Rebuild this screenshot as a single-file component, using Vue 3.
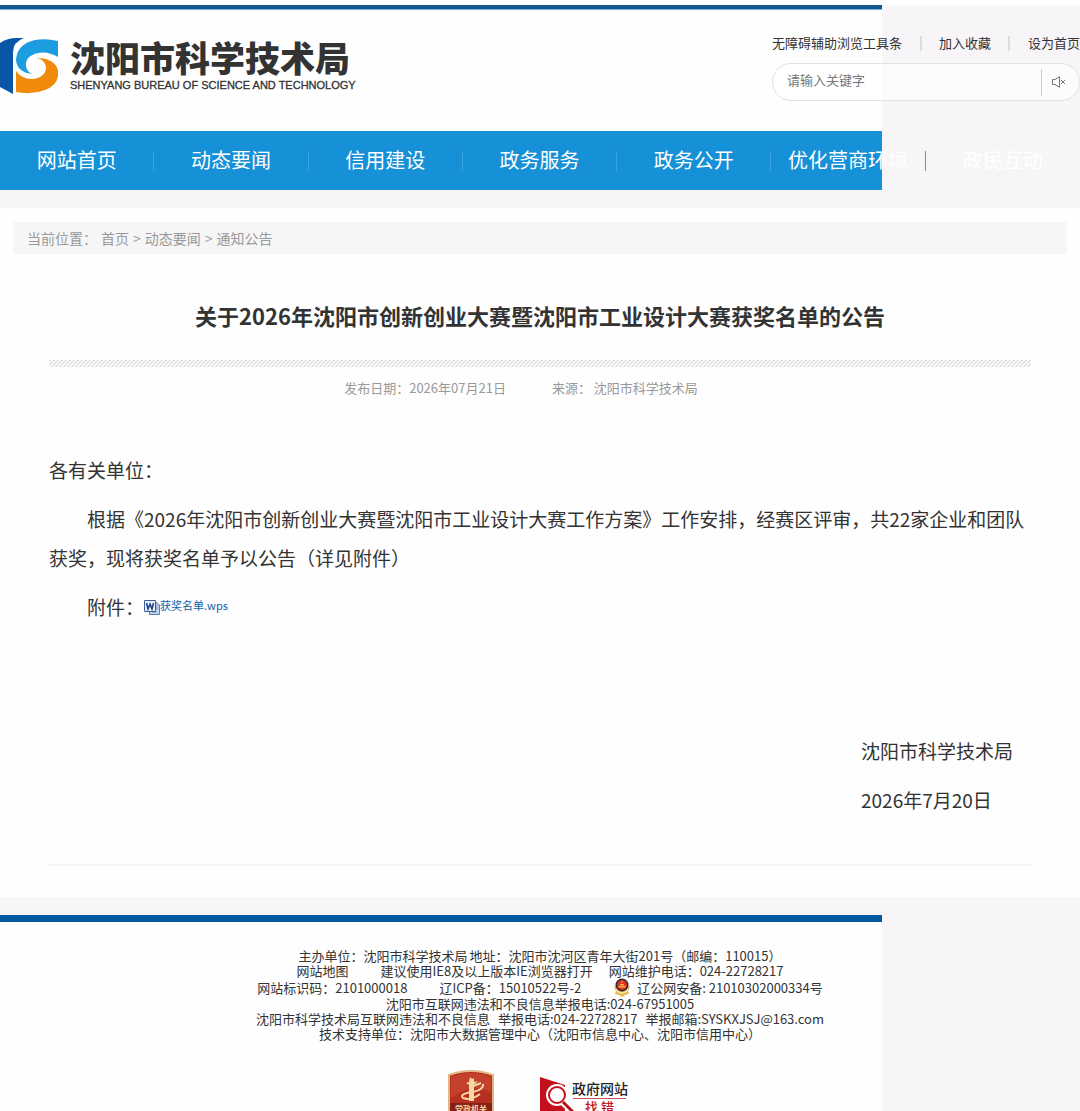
<script setup>
import { ref } from 'vue'

const keyword = ref('')
const navItems = ['网站首页', '动态要闻', '信用建设', '政务服务', '政务公开', '优化营商环境', '政民互动']
const crumbs = ['首页', '动态要闻', '通知公告']
</script>

<template>
  <div class="page">
    <header class="header">
      <div class="band">
        <a class="logo" href="#">
          <svg class="logo-mark" viewBox="0 0 58 56" aria-hidden="true">
            <path d="M0 5Q7 0 17 0H24Q13 4 13 14V56L0 49Z" fill="#0a56a6" />
            <path d="M58 3V19Q48 13 38 15Q25 18 26 28Q27 34 32 36Q17 34 16 22Q17 6 35 2Q46 0 58 3Z" fill="#1b9ddf" />
            <path d="M16 54V33Q23 42 33 41Q46 39 46 29Q45 22 37 20Q54 20 58 32Q60 46 45 52Q32 57 16 54Z" fill="#f08a0a" />
          </svg>
          <span class="logo-text">
            <strong>沈阳市科学技术局</strong>
            <small>SHENYANG BUREAU OF SCIENCE AND TECHNOLOGY</small>
          </span>
        </a>
        <div class="tools">
          <div class="quick">
            <a href="#">无障碍辅助浏览工具条</a>
            <i></i>
            <a href="#">加入收藏</a>
            <i></i>
            <a href="#">设为首页</a>
          </div>
          <form class="search" @submit.prevent>
            <input v-model="keyword" type="text" placeholder="请输入关键字" aria-label="请输入关键字" />
            <button type="button" aria-label="朗读">
              <svg viewBox="0 0 14 12" width="14" height="12" fill="none" stroke="#777" stroke-width="1">
                <path d="M.5 3.5H3L7.5.7V11.3L3 8.5H.5ZM9 4L13 8M13 4L9 8" />
              </svg>
            </button>
          </form>
        </div>
      </div>
      <nav class="nav">
        <a v-for="item in navItems" :key="item" href="#">{{ item }}</a>
      </nav>
    </header>

    <main class="main">
      <div class="crumbs">
        <span>当前位置：</span>
        <template v-for="(crumb, i) in crumbs" :key="crumb">
          <span v-if="i">&gt;</span>
          <a href="#">{{ crumb }}</a>
        </template>
      </div>

      <article class="article">
        <h1>关于2026年沈阳市创新创业大赛暨沈阳市工业设计大赛获奖名单的公告</h1>
        <div class="hatch"></div>
        <div class="meta">
          <span>发布日期：2026年07月21日</span>
          <span>来源： 沈阳市科学技术局</span>
        </div>
        <div class="body">
          <p>各有关单位：</p>
          <p class="indent">根据《2026年沈阳市创新创业大赛暨沈阳市工业设计大赛工作方案》工作安排，经赛区评审，共22家企业和团队获奖，现将获奖名单予以公告（详见附件）</p>
          <p class="indent attach">
            <span>附件：</span>
            <a href="#">
              <svg viewBox="0 0 16 16" width="16" height="16" aria-hidden="true">
                <path d="M5.5 3.5H13L15.500 6V15.500H5.500Z" fill="#c9d8ef" stroke="#5a78ad" />
                <path d="M12 6H14M12 8H14M12 10H14M8 13H13" stroke="#6e8fc4" />
                <path d="M.5 1.500H11.500V12.500H.5Z" fill="#eaf1fb" stroke="#3b5f9c" />
                <path d="M2.500 4L4 10L6 5L8 10L9.500 4" fill="none" stroke="#193f80" stroke-width="1.500" />
              </svg><span>获奖名单.wps</span></a>
          </p>
          <div class="sign">
            <p>沈阳市科学技术局</p>
            <p>2026年7月20日</p>
          </div>
        </div>
      </article>
    </main>

    <footer class="footer">
      <div class="foot-inner">
        <div class="row"><span>主办单位：沈阳市科学技术局</span><span>地址：沈阳市沈河区青年大街201号（邮编：110015）</span></div>
        <div class="row row-site"><a href="#">网站地图</a><span>建议使用IE8及以上版本IE浏览器打开</span><span>网站维护电话：024-22728217</span></div>
        <div class="row row-icp">
          <span>网站标识码：2101000018</span>
          <a href="#">辽ICP备：15010522号-2</a>
          <a class="police" href="#">
            <svg viewBox="0 0 18 19" width="18" height="19" aria-hidden="true">
              <path d="M1 9L3 13L2 16Q6 16 9 19Q12 16 16 16L15 13L17 9L14 7H4Z" fill="#eab54a" />
              <path d="M3 11Q6 15 9 15Q12 15 15 11" fill="none" stroke="#fbe5a0" stroke-width="1.500" />
              <circle cx="9" cy="7" r="6.500" fill="#2b2534" />
              <circle cx="9" cy="7" r="5" fill="#df3424" />
              <path d="M9 2.500L10 4.500H8ZM5.500 8H12.500V9.500H5.500ZM7 6H11V7.500H7Z" fill="#f6b04a" />
            </svg>
            辽公网安备: 21010302000334号
          </a>
        </div>
        <div class="row"><span>沈阳市互联网违法和不良信息举报电话:024-67951005</span></div>
        <div class="row row-report"><span>沈阳市科学技术局互联网违法和不良信息</span><span>举报电话:024-22728217</span><span>举报邮箱:SYSKXJSJ@163.com</span></div>
        <div class="row"><span>技术支持单位：沈阳市大数据管理中心（沈阳市信息中心、沈阳市信用中心）</span></div>
        <div class="badges">
          <a href="#" aria-label="党政机关">
            <svg viewBox="0 0 46 54" width="46" height="54">
              <path d="M1 5Q12 1 23 1Q34 1 45 5V40Q45 48 23 53Q1 48 1 40Z" fill="#b5301f" stroke="#e2b685" stroke-width="2" />
              <path d="M3 7Q12 3 23 3Q34 3 43 7V22Q23 12 3 28Z" fill="#cb4932" opacity=".7" />
              <path d="M2 33H44V41Q40 47 23 51Q6 47 2 41Z" fill="#862015" />
              <path d="M22 7L24 9L26 8V12L30 11L26 15V31H21V15L18 13L21 12Z" fill="#f6d6a5" />
              <path d="M35 14Q36 20 24 22Q11 24 15 28Q23 31 32 24M23 17L33 13" fill="none" stroke="#f6d6a5" stroke-width="2" />
              <text x="23" y="42" text-anchor="middle" font-size="8" font-weight="700" fill="#f6d6a5">党政机关</text>
            </svg>
          </a>
          <a class="find" href="#" aria-label="政府网站找错">
            <svg viewBox="0 0 90 48" width="90" height="48">
              <path d="M0 1L25 9V48H0Z" fill="#c4101c" />
              <circle cx="17" cy="19" r="11" fill="#fff" />
              <circle cx="17" cy="19" r="8" fill="#fff" stroke="#c4101c" stroke-width="2" />
              <path d="M23 26L33 36" stroke="#fff" stroke-width="7" />
              <path d="M23 26L33 36" stroke="#b3101a" stroke-width="3" />
              <path d="M33 22.500H86" stroke="#c4545a" />
              <text x="32" y="18" font-size="14" font-weight="500" fill="#222">政府网站</text>
              <text x="45" y="36" font-size="13" font-weight="500" fill="#c4101c">找 错</text>
            </svg>
          </a>
        </div>
      </div>
    </footer>
  </div>
</template>

<style>
body {
  margin: 0;
  background: #fefefe;
}
</style>

<style scoped>
.page {
  --band: calc(100% - 198px);
  --gray: #f7f5f8;
  padding-top: 5px;
  overflow: hidden;
  font-family: "Noto Sans CJK SC", sans-serif;
  font-size: 13px;
  color: #333;
}
a {
  color: inherit;
  text-decoration: none;
}
.header {
  background: var(--gray);
  padding-bottom: 18px;
}
.band {
  display: flex;
  justify-content: space-between;
  align-items: flex-start;
  height: 126px;
  background:
    linear-gradient(#17578f 4px, #6fb4e4 4px, #6fb4e4 5px, #fefefe 5px) no-repeat 0 0 / var(--band) 100%;
}
.logo {
  display: flex;
  gap: 12px;
  padding-top: 33px;
}
.logo-mark {
  width: 58px;
  height: 56px;
}
.logo-text {
  display: flex;
  flex-direction: column;
  color: #333;
}
.logo-text strong {
  font-size: 35px;
  font-weight: 900;
  line-height: 38px;
}
.logo-text small {
  font: 11px/18px "Liberation Sans", sans-serif;
  -webkit-text-stroke: 0.3px #333;
  white-space: nowrap;
}
.tools {
  width: 308px;
  padding-top: 28px;
}
.quick {
  display: flex;
  justify-content: space-between;
  align-items: center;
  line-height: 20px;
}
.quick i {
  width: 2px;
  height: 15px;
  background: #ddd;
}
.search {
  display: flex;
  align-items: center;
  box-sizing: border-box;
  height: 38px;
  margin-top: 10px;
  border: 1px solid #e2e2e2;
  border-radius: 19px;
  background: rgba(255, 255, 255, 0.7);
}
.search input {
  flex: 1;
  min-width: 0;
  height: 34px;
  padding: 0 14px 5px;
  box-sizing: border-box;
  border: 0;
  outline: 0;
  background: none;
  font: inherit;
}
.search input::placeholder {
  color: #777;
}
.search button {
  display: flex;
  align-items: center;
  width: 38px;
  height: 27px;
  padding: 0 0 0 10px;
  border: 0;
  border-left: 1px solid #ccc;
  background: none;
}
.nav {
  display: grid;
  grid-template-columns: repeat(7, 1fr);
  align-items: center;
  height: 59px;
  background: linear-gradient(#1690d6, #1690d6) no-repeat 0 0 / var(--band) 100%;
}
.nav a {
  border-right: 1px solid #3aa5e2;
  color: #fff;
  font-size: 20px;
  line-height: 18px;
  padding-bottom: 2px;
  text-align: center;
  white-space: nowrap;
}
.nav a:last-child {
  border-right: 0;
}
.main {
  padding: 14px 13px 31px;
}
.crumbs {
  display: flex;
  align-items: center;
  gap: 4px;
  height: 32px;
  padding: 0 14px;
  background: #f6f6f7;
  color: #999;
  font-size: 14px;
  line-height: 20px;
}
.article {
  margin: 0 36px;
  border-bottom: 2px solid #f3f3f4;
}
h1 {
  margin: 0;
  padding-top: 42px;
  font-size: 22px;
  line-height: 38px;
  text-align: center;
}
.hatch {
  height: 7px;
  margin-top: 26px;
  background: linear-gradient(135deg, #e2e2e2 25%, #fafafa 25%, #fafafa 50%, #e2e2e2 50%, #e2e2e2 75%, #fafafa 75%) 0 0 / 4px 4px;
}
.meta {
  display: flex;
  justify-content: center;
  gap: 46px;
  padding: 11px 38px 0 0;
  color: #999;
  line-height: 20px;
}
.body {
  padding: 52px 0 45px;
  font-size: 19px;
  line-height: 39px;
}
.body p {
  margin: 0 0 10px;
}
.body .indent {
  text-indent: 2em;
}
.body .attach {
  display: flex;
  align-items: center;
}
.attach a {
  display: flex;
  align-items: center;
  color: #0a61a8;
  font-size: 11px;
  line-height: 16px;
  text-indent: 0;
}
.attach a span {
  padding-bottom: 4px;
}
.sign {
  width: 152px;
  margin: 105px 18px 0 auto;
}
.sign p:last-child {
  margin: 0;
}
.footer {
  border-top: 18px solid var(--gray);
  background: linear-gradient(#0059a1 7px, #fefefe 7px) no-repeat 0 0 / var(--band) 100% var(--gray);
}
.foot-inner {
  padding-top: 33px;
}
.row {
  display: flex;
  justify-content: center;
  gap: 2px;
  line-height: 15px;
  white-space: nowrap;
}
.row-site {
  gap: 16px;
}
.row-site a {
  margin-right: 16px;
}
.row-icp {
  align-items: center;
  gap: 32px;
  height: 18px;
}
.police {
  display: flex;
  align-items: center;
  gap: 6px;
}
.row-report {
  gap: 8px;
}
.badges {
  display: flex;
  justify-content: center;
  gap: 46px;
  height: 41px;
  margin-top: 29px;
  padding-right: 2px;
  overflow: hidden;
}
.find {
  padding-top: 6px;
}
</style>
